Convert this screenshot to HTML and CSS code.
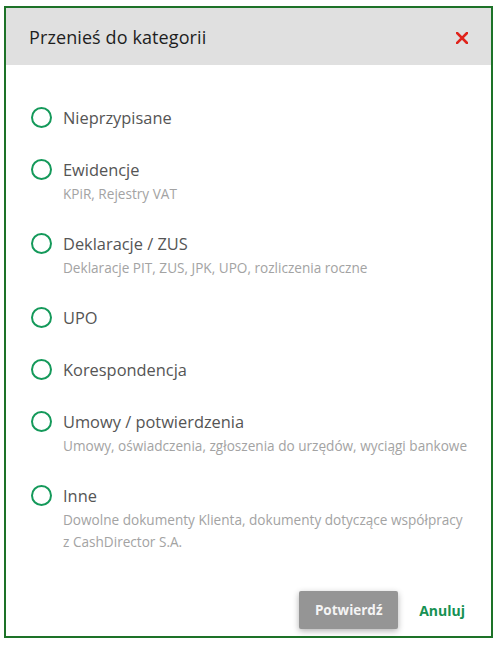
FILE: index.html
```html
<!DOCTYPE html>
<html lang="pl">
<head>
  <meta charset="UTF-8">
  <title>Przenieś do kategorii</title>
  <link rel="stylesheet" href="styles.css">
</head>
<body>

<div class="dialog">
  <!-- Nagłówek -->
  <div class="dialog-header">
    <h1>Przenieś do kategorii</h1>
    <button class="close" type="button" aria-label="Zamknij">
      <svg width="12" height="12" viewBox="0 0 12 12">
        <path d="M1 1 L11 11 M11 1 L1 11" stroke="#e0231b" stroke-width="2.6" stroke-linecap="square" fill="none"/>
      </svg>
    </button>
  </div>

  <!-- Lista kategorii -->
  <div class="dialog-body">
    <label class="option">
      <span class="radio"></span>
      <span class="option-text">
        <span class="option-title">Nieprzypisane</span>
      </span>
    </label>
    <label class="option">
      <span class="radio"></span>
      <span class="option-text">
        <span class="option-title">Ewidencje</span>
        <span class="option-desc">KPiR, Rejestry VAT</span>
      </span>
    </label>
    <label class="option">
      <span class="radio"></span>
      <span class="option-text">
        <span class="option-title">Deklaracje / ZUS</span>
        <span class="option-desc">Deklaracje PIT, ZUS, JPK, UPO, rozliczenia roczne</span>
      </span>
    </label>
    <label class="option">
      <span class="radio"></span>
      <span class="option-text">
        <span class="option-title">UPO</span>
      </span>
    </label>
    <label class="option">
      <span class="radio"></span>
      <span class="option-text">
        <span class="option-title">Korespondencja</span>
      </span>
    </label>
    <label class="option">
      <span class="radio"></span>
      <span class="option-text">
        <span class="option-title">Umowy / potwierdzenia</span>
        <span class="option-desc">Umowy, oświadczenia, zgłoszenia do urzędów, wyciągi bankowe</span>
      </span>
    </label>
    <label class="option">
      <span class="radio"></span>
      <span class="option-text">
        <span class="option-title">Inne</span>
        <span class="option-desc">Dowolne dokumenty Klienta, dokumenty dotyczące współpracy<br>z CashDirector S.A.</span>
      </span>
    </label>
  </div>

  <!-- Przyciski -->
  <div class="dialog-footer">
    <button class="btn-confirm" type="button">Potwierdź</button>
    <button class="btn-cancel" type="button">Anuluj</button>
  </div>
</div>

</body>
</html>
```

FILE: styles.css
```css
/* --- RESET & BASE --- */
* {
  margin: 0;
  padding: 0;
  box-sizing: border-box;
}
body {
  background: #fff;
  font-family: 'Open Sans', sans-serif;
  padding: 6px 3px 0 4px;
}

/* --- DIALOG --- */
.dialog {
  width: 489px;
  border: 2px solid #1d7228;
  background: #fff;
}

.dialog-header {
  display: flex;
  align-items: center;
  justify-content: space-between;
  height: 57px;
  padding: 0 23px 0 23px;
  background: #e0e0e0;
}

.dialog-header h1 {
  font-size: 18px;
  font-weight: 500;
  color: #1e1e1e;
  letter-spacing: 0.1px;
}

.close {
  display: flex;
  border: none;
  background: none;
  cursor: pointer;
  margin-top: 3px;
}

/* --- OPTIONS --- */
.dialog-body {
  display: flex;
  flex-direction: column;
  gap: 26px;
  padding: 40px 10px 0 25px;
}

.option {
  display: flex;
  align-items: flex-start;
  gap: 11px;
  cursor: pointer;
}

.radio {
  flex: none;
  width: 21px;
  height: 21px;
  margin-top: 2px;
  border: 2.5px solid #14995a;
  border-radius: 50%;
}

.option-text {
  display: flex;
  flex-direction: column;
}

.option-title {
  font-size: 16.4px;
  line-height: 26px;
  font-weight: 500;
  color: #555;
}

.option-desc {
  font-size: 13.6px;
  line-height: 22px;
  color: #a3a3a3;
}

/* --- FOOTER --- */
.dialog-footer {
  display: flex;
  align-items: center;
  justify-content: flex-end;
  gap: 21px;
  padding: 38px 26px 7px 0;
}

.btn-confirm {
  width: 99px;
  height: 38px;
  border: none;
  border-radius: 2px;
  background: #959595;
  color: #f4f4f4;
  font-family: inherit;
  font-size: 13.5px;
  font-weight: 700;
  box-shadow: 0 2px 6px rgba(0,0,0,0.3);
  cursor: pointer;
}

.btn-cancel {
  border: none;
  background: none;
  color: #169153;
  font-family: inherit;
  font-size: 14px;
  font-weight: 700;
  cursor: pointer;
}
```
